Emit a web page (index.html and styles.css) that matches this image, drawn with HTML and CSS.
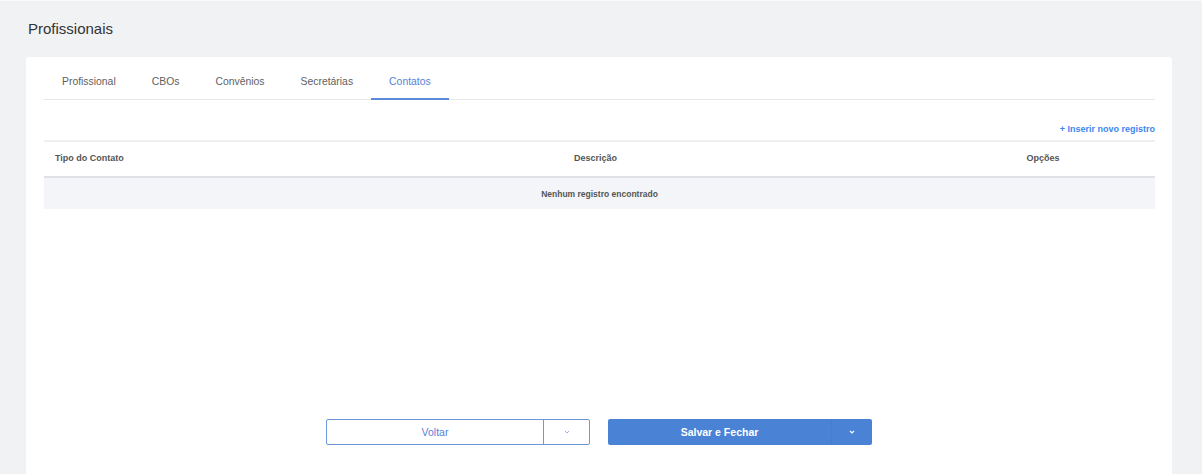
FILE: index.html
```html
<!DOCTYPE html>
<html lang="pt">
<head>
<meta charset="utf-8">
<link rel="stylesheet" href="styles.css">
</head>
<body>
<div class="page">
  <h1 class="title">Profissionais</h1>
  <div class="card">
    <nav class="tabs">
      <a class="tab">Profissional</a>
      <a class="tab">CBOs</a>
      <a class="tab">Convênios</a>
      <a class="tab">Secretárias</a>
      <a class="tab active">Contatos</a>
    </nav>
    <div class="toolbar"><a class="insert">+ Inserir novo registro</a></div>
    <table class="grid">
      <thead>
        <tr>
          <th class="c-tipo">Tipo do Contato</th>
          <th class="c-desc">Descrição</th>
          <th class="c-opt">Opções</th>
        </tr>
      </thead>
      <tbody>
        <tr class="empty"><td colspan="3">Nenhum registro encontrado</td></tr>
      </tbody>
    </table>
    <div class="actions">
      <div class="split outline">
        <button class="main">Voltar</button>
        <button class="drop"><svg width="6" height="4" viewBox="0 0 6 4"><path d="M1 1l2 2 2-2" fill="none" stroke="currentColor" stroke-width="1"/></svg></button>
      </div>
      <div class="split solid">
        <button class="main">Salvar e Fechar</button>
        <button class="drop"><svg width="6" height="4" viewBox="0 0 6 4"><path d="M1 1l2 2 2-2" fill="none" stroke="currentColor" stroke-width="1.1"/></svg></button>
      </div>
    </div>
  </div>
</div>
</body>
</html>
```
FILE: styles.css
```css
html, body { margin: 0; padding: 0; }
body {
  background: #f1f2f4;
  font-family: "Liberation Sans", Arial, sans-serif;
  color: #333;
  height: 474px;
  overflow: hidden;
}
.page {
  padding: 19px 30px 0 26px;
  border-top: 1px solid #fafafa;
}
.title {
  margin: 0 0 20px 2px;
  font-size: 15px;
  font-weight: normal;
  color: #333;
  line-height: 17px;
}
.card {
  background: #fff;
  border-radius: 3px 3px 0 0;
  padding: 11px 17px 0 18px;
  height: 420px;
}
.tabs {
  display: flex;
  border-bottom: 1px solid #e6e7ea;
  height: 31px;
}
.tab {
  padding: 8px 18px 0;
  font-size: 10.4px;
  color: #5f5f5f;
  height: 23px;
  line-height: 12px;
}
.tab.active {
  color: #5a80d8;
  border-bottom: 2px solid #5a8ad9;
  margin-bottom: -1px;
  height: 22px;
}
.toolbar {
  display: flex;
  justify-content: flex-end;
  padding-top: 23px;
  height: 17px;
}
.insert {
  font-size: 9px;
  font-weight: bold;
  color: #3d86f0;
  line-height: 12px;
}
.grid {
  width: 100%;
  border-collapse: collapse;
  table-layout: fixed;
}
.grid th {
  font-size: 9px;
  font-weight: bold;
  color: #555;
  height: 32px;
  padding: 0 0 2px;
  border-top: 2px solid #eeeff1;
  border-bottom: 2px solid #dfe1e6;
}
.c-tipo { width: 205px; text-align: left; padding-left: 11px !important; }
.c-desc { text-align: center; }
.c-opt { width: 224px; text-align: center; }
.empty td {
  background: #f3f5f8;
  height: 31px;
  padding: 0;
  text-align: center;
  font-size: 8.5px;
  font-weight: bold;
  color: #555;
}
.actions {
  display: flex;
  justify-content: center;
  gap: 18px;
  margin-top: 210px;
  padding-right: 1px;
}
.split {
  display: flex;
  width: 264px;
  height: 26px;
  border-radius: 2px;
  box-sizing: border-box;
  overflow: hidden;
}
.split button {
  border: 0;
  background: transparent;
  font-family: inherit;
  font-size: 10.5px;
  padding: 0;
  cursor: pointer;
}
.split .main { flex: 1; }
.split .drop { width: 46px; display: flex; align-items: center; justify-content: center; }
.outline {
  border: 1px solid #6f97dc;
  background: #fff;
}
.outline .main { color: #5a80d8; }
.outline .drop { border-left: 1px solid #6f97dc; color: #9ab2e2; }
.solid {
  background: #4a82d6;
}
.solid .main { color: #fff; font-weight: bold; }
.solid .drop { border-left: 1px solid #457dcf; color: #fff; width: 41px; }
```
